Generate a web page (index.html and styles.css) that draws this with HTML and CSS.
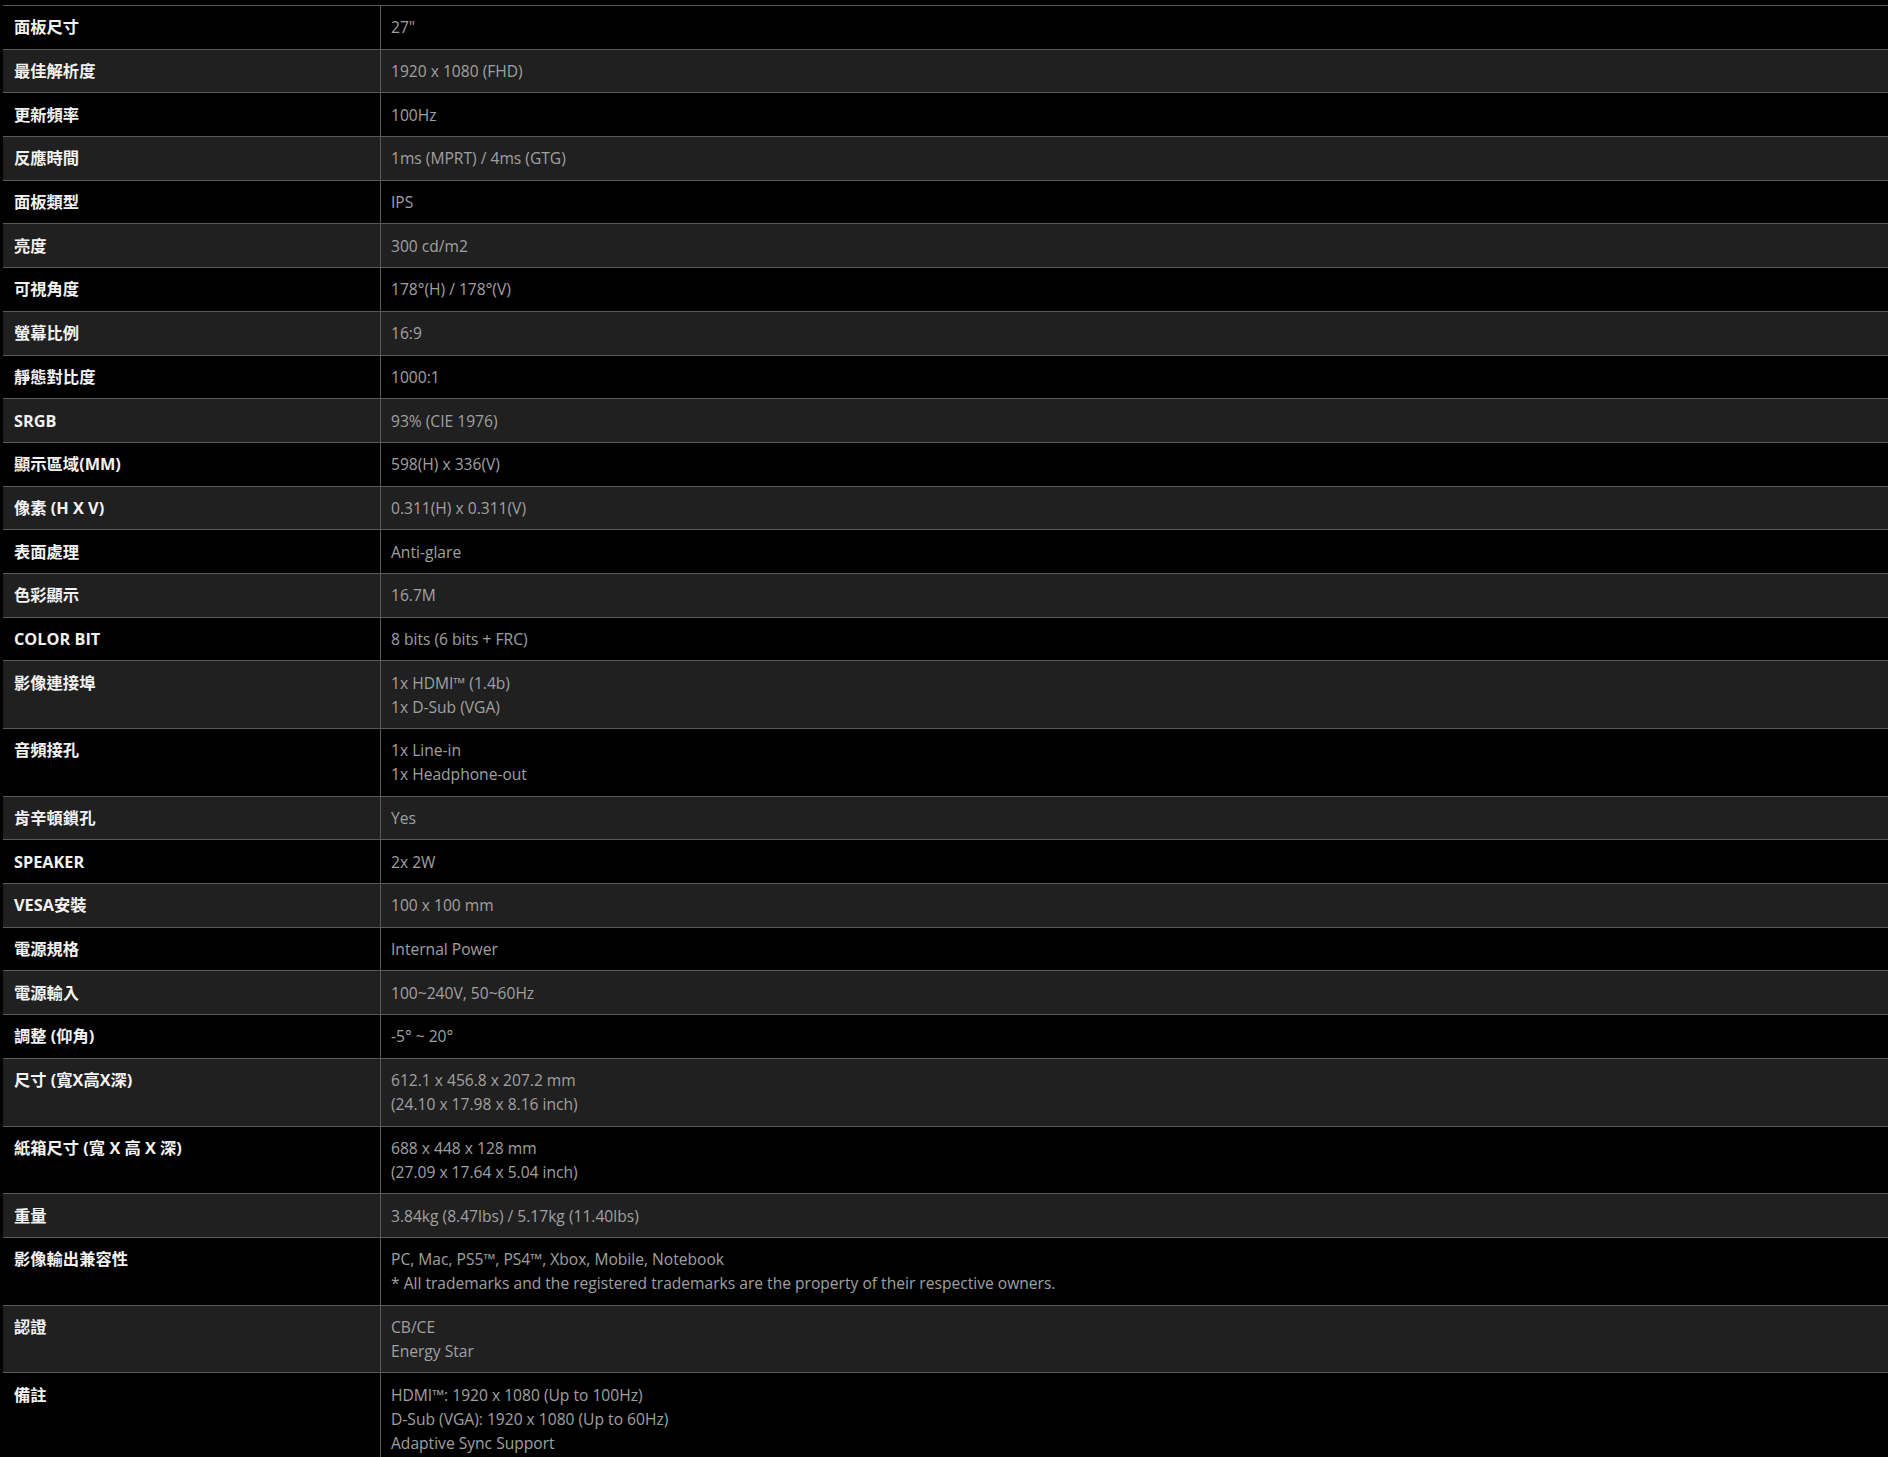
FILE: index.html
```html
<!DOCTYPE html>
<html lang="zh-Hant">
<head>
<meta charset="utf-8">
<title>規格</title>
<link rel="stylesheet" href="styles.css">
</head>
<body>
<div class="page">
<table class="spec">
<tbody>
<tr><th>面板尺寸</th><td>27"</td></tr>
<tr><th>最佳解析度</th><td>1920 x 1080 (FHD)</td></tr>
<tr><th>更新頻率</th><td>100Hz</td></tr>
<tr><th>反應時間</th><td>1ms (MPRT) / 4ms (GTG)</td></tr>
<tr><th>面板類型</th><td>IPS</td></tr>
<tr><th>亮度</th><td>300 cd/m2</td></tr>
<tr><th>可視角度</th><td>178°(H) / 178°(V)</td></tr>
<tr><th>螢幕比例</th><td>16:9</td></tr>
<tr><th>靜態對比度</th><td>1000:1</td></tr>
<tr><th>SRGB</th><td>93% (CIE 1976)</td></tr>
<tr><th>顯示區域(MM)</th><td>598(H) x 336(V)</td></tr>
<tr><th>像素 (H X V)</th><td>0.311(H) x 0.311(V)</td></tr>
<tr><th>表面處理</th><td>Anti-glare</td></tr>
<tr><th>色彩顯示</th><td>16.7M</td></tr>
<tr><th>COLOR BIT</th><td>8 bits (6 bits + FRC)</td></tr>
<tr><th>影像連接埠</th><td>1x HDMI™ (1.4b)<br>1x D-Sub (VGA)</td></tr>
<tr><th>音頻接孔</th><td>1x Line-in<br>1x Headphone-out</td></tr>
<tr><th>肯辛頓鎖孔</th><td>Yes</td></tr>
<tr><th>SPEAKER</th><td>2x 2W</td></tr>
<tr><th>VESA安裝</th><td>100 x 100 mm</td></tr>
<tr><th>電源規格</th><td>Internal Power</td></tr>
<tr><th>電源輸入</th><td>100~240V, 50~60Hz</td></tr>
<tr><th>調整 (仰角)</th><td>-5° ~ 20°</td></tr>
<tr><th>尺寸 (寬X高X深)</th><td>612.1 x 456.8 x 207.2 mm<br>(24.10 x 17.98 x 8.16 inch)</td></tr>
<tr><th>紙箱尺寸 (寬 X 高 X 深)</th><td>688 x 448 x 128 mm<br>(27.09 x 17.64 x 5.04 inch)</td></tr>
<tr><th>重量</th><td>3.84kg (8.47lbs) / 5.17kg (11.40lbs)</td></tr>
<tr><th>影像輸出兼容性</th><td>PC, Mac, PS5™, PS4™, Xbox, Mobile, Notebook<br>* All trademarks and the registered trademarks are the property of their respective owners.</td></tr>
<tr><th>認證</th><td>CB/CE<br>Energy Star</td></tr>
<tr><th>備註</th><td>HDMI™: 1920 x 1080 (Up to 100Hz)<br>D-Sub (VGA): 1920 x 1080 (Up to 60Hz)<br>Adaptive Sync Support</td></tr>
</tbody>
</table>
</div>
</body>
</html>
```

FILE: styles.css
```css
html, body {
  margin: 0;
  padding: 0;
  background: #000;
}

.page {
  padding: 5px 0 0 3px;
}

.spec {
  width: 100%;
  border-collapse: collapse;
  border-top: 1px solid #5a5a5a;
  font-family: "Open Sans", "Noto Sans CJK TC", sans-serif;
  font-size: 15.6px;
  line-height: 24px;
}

.spec tr {
  background: #000;
  border-bottom: 1px solid #5a5a5a;
}

.spec tr:nth-child(even) {
  background: #202020;
}

.spec th {
  width: 366px;
  padding: 9.35px 0 9.35px 11px;
  text-align: left;
  vertical-align: top;
  font-weight: 700;
  font-size: 16.3px;
  color: #f2f2f2;
  border-right: 1px solid #5a5a5a;
}

.spec td {
  padding: 9.35px 10px;
  text-align: left;
  vertical-align: top;
  font-weight: 400;
  color: #a0a0a0;
}
```
